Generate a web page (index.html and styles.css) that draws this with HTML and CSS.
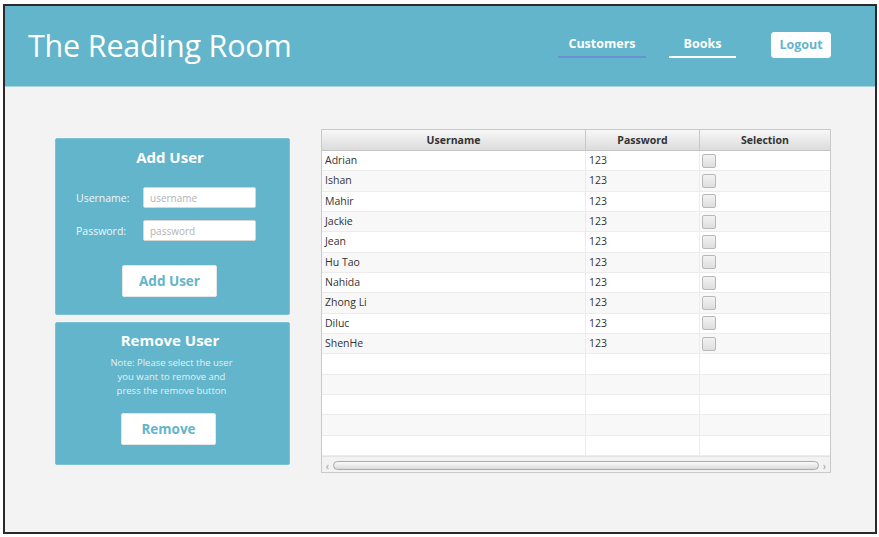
FILE: index.html
```html
<!DOCTYPE html>
<html>
<head>
<meta charset="utf-8">
<link rel="stylesheet" href="styles.css">
</head>
<body>
<div class="window">
  <header class="header">
    <h1 class="title">The Reading Room</h1>
    <nav class="nav">
      <a class="nav-link active">Customers</a>
      <a class="nav-link books">Books</a>
      <button class="logout">Logout</button>
    </nav>
  </header>
  <main class="main">
    <aside class="side">
      <section class="panel add">
        <h2 class="panel-title">Add User</h2>
        <div class="field first">
          <label class="label">Username:</label>
          <input class="input" placeholder="username">
        </div>
        <div class="field">
          <label class="label">Password:</label>
          <input class="input" placeholder="password">
        </div>
        <button class="btn btn-add">Add User</button>
      </section>
      <section class="panel remove">
        <h2 class="panel-title">Remove User</h2>
        <p class="note">Note: Please select the user<br>you want to remove and<br>press the remove button</p>
        <button class="btn btn-remove">Remove</button>
      </section>
    </aside>
    <div class="table">
      <div class="thead">
        <div class="th">Username</div>
        <div class="th">Password</div>
        <div class="th">Selection</div>
      </div>
      <div class="tbody">
        <div class="tr"><div class="td">Adrian</div><div class="td">123</div><div class="td"><span class="check"></span></div></div>
        <div class="tr"><div class="td">Ishan</div><div class="td">123</div><div class="td"><span class="check"></span></div></div>
        <div class="tr"><div class="td">Mahir</div><div class="td">123</div><div class="td"><span class="check"></span></div></div>
        <div class="tr"><div class="td">Jackie</div><div class="td">123</div><div class="td"><span class="check"></span></div></div>
        <div class="tr"><div class="td">Jean</div><div class="td">123</div><div class="td"><span class="check"></span></div></div>
        <div class="tr"><div class="td">Hu Tao</div><div class="td">123</div><div class="td"><span class="check"></span></div></div>
        <div class="tr"><div class="td">Nahida</div><div class="td">123</div><div class="td"><span class="check"></span></div></div>
        <div class="tr"><div class="td">Zhong Li</div><div class="td">123</div><div class="td"><span class="check"></span></div></div>
        <div class="tr"><div class="td">Diluc</div><div class="td">123</div><div class="td"><span class="check"></span></div></div>
        <div class="tr"><div class="td">ShenHe</div><div class="td">123</div><div class="td"><span class="check"></span></div></div>
        <div class="tr"><div class="td"></div><div class="td"></div><div class="td"></div></div>
        <div class="tr"><div class="td"></div><div class="td"></div><div class="td"></div></div>
        <div class="tr"><div class="td"></div><div class="td"></div><div class="td"></div></div>
        <div class="tr"><div class="td"></div><div class="td"></div><div class="td"></div></div>
        <div class="tr"><div class="td"></div><div class="td"></div><div class="td"></div></div>
        <div class="tr"><div class="td"></div><div class="td"></div><div class="td"></div></div>
      </div>
      <div class="scrollbar">
        <span class="arrow">&lsaquo;</span>
        <span class="thumb"></span>
        <span class="arrow">&rsaquo;</span>
      </div>
    </div>
  </main>
</div>
</body>
</html>
```

FILE: styles.css
```css
* { box-sizing: border-box; }
html, body { margin: 0; padding: 0; background: #ffffff; }
body { font-family: "Open Sans", "Noto Sans", sans-serif; }

.window {
  margin: 4px 0 0 3px;
  width: 874px;
  height: 530px;
  border: 2px solid #2a2a2a;
  background: #f3f3f3;
  display: flex;
  flex-direction: column;
  overflow: hidden;
}

.header {
  height: 81px;
  background: #62b5ca;
  border-bottom: 1px solid #a9d5e1;
  display: flex;
  align-items: center;
  justify-content: space-between;
  padding: 0 44px 0 23px;
  flex-shrink: 0;
}
.title {
  margin: 0 0 2px;
  color: #ffffff;
  font-weight: 400;
  font-size: 30.5px;
  letter-spacing: -0.2px;
  line-height: 40px;
}
.nav { display: flex; align-items: center; margin-bottom: 3px; }
.nav-link {
  display: block;
  height: 26px;
  padding: 3px 0 4px;
  line-height: 17px;
  font-size: 12.5px;
  font-weight: 700;
  color: #ffffff;
  text-align: center;
  border-bottom: 2px solid #ffffff;
}
.nav-link.active { width: 88px; border-bottom-color: #6c8ed2; }
.nav-link.books { width: 67px; margin-left: 23px; }
.logout {
  margin-left: 35px;
  width: 60px;
  height: 26px;
  border: 1px solid #ffffff;
  border-radius: 3px;
  background: #ffffff;
  color: #62b5ca;
  font-family: inherit;
  font-weight: 700;
  font-size: 12.5px;
  padding: 0;
}

.main {
  flex: 1;
  display: flex;
  align-items: flex-start;
  padding-left: 50px;
}
.side {
  width: 235px;
  margin-top: 51px;
  display: flex;
  flex-direction: column;
  gap: 7px;
}
.panel {
  background: #62b5ca;
  border: 1px solid #7cc2d4;
  border-radius: 2px;
  color: #ffffff;
  display: flex;
  flex-direction: column;
}
.panel.add { height: 177px; padding-top: 7px; }
.panel.remove { height: 143px; padding-top: 6px; align-items: center; }
.panel-title {
  margin: 0;
  padding-right: 5px;
  text-align: center;
  font-size: 15px;
  font-weight: 700;
  line-height: 22px;
}
.field {
  display: flex;
  align-items: center;
  height: 21px;
  padding-left: 20px;
}
.field.first { margin-top: 19px; }
.field + .field { margin-top: 12px; }
.label {
  width: 67px;
  font-size: 10.5px;
  color: #eef7fa;
}
.input {
  width: 113px;
  height: 21px;
  border: 1px solid #d6d6d6;
  border-radius: 2px;
  background: #ffffff;
  font-family: inherit;
  font-size: 10px;
  padding: 0 6px;
  outline: none;
}
.input::placeholder { color: #b3b3b3; }
.btn {
  width: 95px;
  height: 32px;
  background: #ffffff;
  border: 1px solid #e6e6e6;
  border-radius: 2px;
  color: #62b5ca;
  font-family: inherit;
  font-weight: 700;
  font-size: 13.5px;
  padding: 0;
}
.btn-add { margin: 24px 0 0 66px; }
.note {
  margin: 5px 0 0;
  padding-right: 2px;
  text-align: center;
  font-size: 9.5px;
  line-height: 14px;
  color: #e2f1f5;
}
.btn-remove { margin: 15px 0 0 65px; align-self: flex-start; }

.table {
  margin-top: 42px;
  margin-left: 31px;
  width: 510px;
  height: 344px;
  border: 1px solid #c9c9c9;
  background: #ffffff;
  display: flex;
  flex-direction: column;
  overflow: hidden;
}
.thead {
  display: grid;
  grid-template-columns: 264px 114px 1fr;
  height: 21px;
  background: linear-gradient(#f7f7f7, #dcdcdc);
  border-bottom: 1px solid #c4c4c4;
  flex-shrink: 0;
}
.th {
  text-align: center;
  font-size: 10.5px;
  font-weight: 700;
  color: #333333;
  line-height: 21px;
  border-right: 1px solid #c8c8c8;
}
.th:last-child { border-right: none; }
.tbody { flex: 1; overflow: hidden; }
.tr {
  display: grid;
  grid-template-columns: 264px 114px 1fr;
  height: 20.33px;
  border-bottom: 1px solid #ececec;
}
.tr:nth-child(even) { background: #f8f8f8; }
.td {
  font-size: 10.5px;
  color: #333333;
  padding-left: 3px;
  line-height: 19px;
  border-right: 1px solid #ececec;
  display: flex;
  align-items: center;
}
.td:last-child { border-right: none; padding-left: 2px; }
.check {
  width: 14px;
  height: 14px;
  border: 1px solid #b8b8b8;
  border-radius: 2px;
  background: linear-gradient(#f2f2f2, #dedede);
}
.scrollbar {
  height: 16px;
  flex-shrink: 0;
  background: #f2f2f2;
  display: flex;
  align-items: center;
  padding: 2px 2px 0;
  border-top: 1px solid #e4e4e4;
}
.arrow {
  width: 7px;
  font-size: 11px;
  color: #9a9a9a;
  text-align: center;
  line-height: 12px;
}
.thumb {
  flex: 1;
  height: 9px;
  margin: 0 2px;
  border: 1px solid #a9a9a9;
  border-radius: 5px;
  background: linear-gradient(#fbfbfb, #dadada);
}
```
